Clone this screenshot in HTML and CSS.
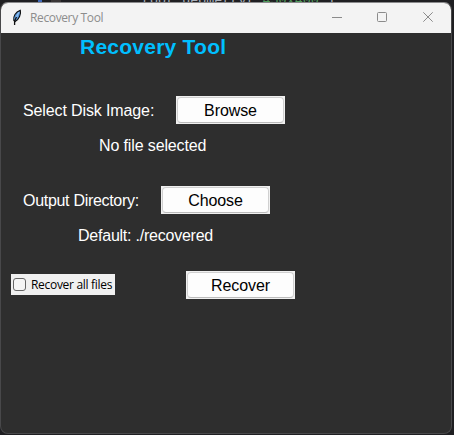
FILE: index.html
```
<!DOCTYPE html>
<html lang="en">
<head>
<meta charset="utf-8">
<title>Recovery Tool</title>
<link rel="stylesheet" href="styles.css">
</head>
<body>
<div class="editor"><i class="marker"></i><i class="number"></i><code><span class="call">root.geometry(</span><span class="str">"450x400"</span><span class="call">)</span></code></div>
<main class="window">
  <header class="titlebar">
    <svg class="feather" width="10" height="17" viewBox="0 0 10 17"><path d="M1.8 11.5C1 7.5 3.5 3 8.3 1.2C9.4 5 7 10.5 3.2 12.5Z" fill="#5b9be0" stroke="#111" stroke-width="1.1"/><path d="M6.8 3.2L3.5 10" stroke="#8fbff0" stroke-width="1.2" fill="none"/><path d="M4.5 8L2.6 12V16" fill="none" stroke="#111" stroke-width="1.3"/></svg>
    <span class="caption">Recovery Tool</span>
    <div class="controls">
      <svg width="10" height="10" viewBox="0 0 10 10"><path d="M0 5.5H10"/></svg>
      <svg class="maximize" width="10" height="10" viewBox="0 0 10 10"><rect x=".5" y=".5" width="9" height="9" rx="1"/></svg>
      <svg width="10" height="10" viewBox="0 0 10 10"><path d="M.3 .3L9.7 9.7M9.7 .3L.3 9.7"/></svg>
    </div>
  </header>
  <h1>Recovery Tool</h1>
  <section class="row disk"><span class="label">Select Disk Image:</span><button>Browse</button></section>
  <p class="status file">No file selected</p>
  <section class="row output"><span class="label">Output Directory:</span><button>Choose</button></section>
  <p class="status folder">Default: ./recovered</p>
  <section class="row actions"><label class="check"><input type="checkbox"><span>Recover all files</span></label><button>Recover</button></section>
</main>
</body>
</html>
```
FILE: styles.css
```
* { box-sizing: border-box; }
body { margin: 0; width: 454px; height: 435px; overflow: hidden; background: #1f1f22; font-family: "Liberation Sans", Arial, sans-serif; }
.editor { height: 2px; padding-left: 38px; overflow: hidden; display: flex; align-items: center; }
.editor code { margin-left: 81px; font: 13.4px/14px "Liberation Mono", monospace; color: #a9b0bb; }
.marker { width: 4px; height: 3px; background: #4169b8; }
.number { width: 10px; height: 3px; margin-left: 9px; background: #3a3636; }
.editor .str { color: #4f9a5b; }
.window { width: 452px; height: 432px; border: 1px solid #48484a; border-top-color: #8a8a8c; border-radius: 8px; background: #2e2e2e; overflow: hidden; }
.titlebar { height: 30px; background: #f3f3f3; display: flex; align-items: center; padding: 0 18px 0 11px; }
.feather { margin-top: -2px; }
.caption { margin-left: 8px; font: 12px/16px "Open Sans", sans-serif; letter-spacing: -.37px; color: #8d8d8d; }
.controls { margin-left: auto; display: flex; gap: 35px; margin-top: -2px; }
.controls .maximize { margin-right: 1px; }
.controls svg { fill: none; stroke: #8b8b8b; stroke-width: 1; }
h1 { margin: 0 0 0 79px; height: 27px; font-size: 21px; line-height: 28px; color: #00bfff; letter-spacing: .24px; white-space: nowrap; }
.row { display: flex; color: #fff; font-size: 16px; line-height: 30px; height: 28px; white-space: nowrap; }
.disk { margin: 36px 0 0 22px; }
.disk .label { width: 153px; letter-spacing: -.12px; }
.output { margin: 30px 0 0 22px; }
.output .label { width: 138px; letter-spacing: -.3px; }
button { width: 109px; height: 28px; padding: 1px 0 0; border: 1px solid #f0f0f0; background: #f0f0f0; font: 16px/26px "Liberation Sans", Arial, sans-serif; letter-spacing: -.1px; color: #000; position: relative; z-index: 0; }
button::before { content: ""; position: absolute; z-index: -1; inset: 0; border: 1px solid #d0d0d0; border-bottom-color: #bbb; border-radius: 4px; background: #fdfdfd; }
.status { margin: 10px 0 0; height: 22px; font-size: 16px; line-height: 24px; color: #fff; }
.file { padding-left: 98px; letter-spacing: -.13px; }
.folder { padding-left: 77px; letter-spacing: -.23px; }
.actions { margin: 25px 0 0 10px; }
.check { width: 104px; height: 21px; margin: 3px 71px 0 0; background: #f0f0f0; display: flex; align-items: center; padding-left: 2px; color: #000; font: 12px/21px "Open Sans", sans-serif; letter-spacing: -.3px; }
.check input { flex: none; appearance: none; width: 13px; height: 13px; margin: 0 5px 0 0; border: 1px solid #666; border-radius: 3px; background: #f5f5f5; }
```
